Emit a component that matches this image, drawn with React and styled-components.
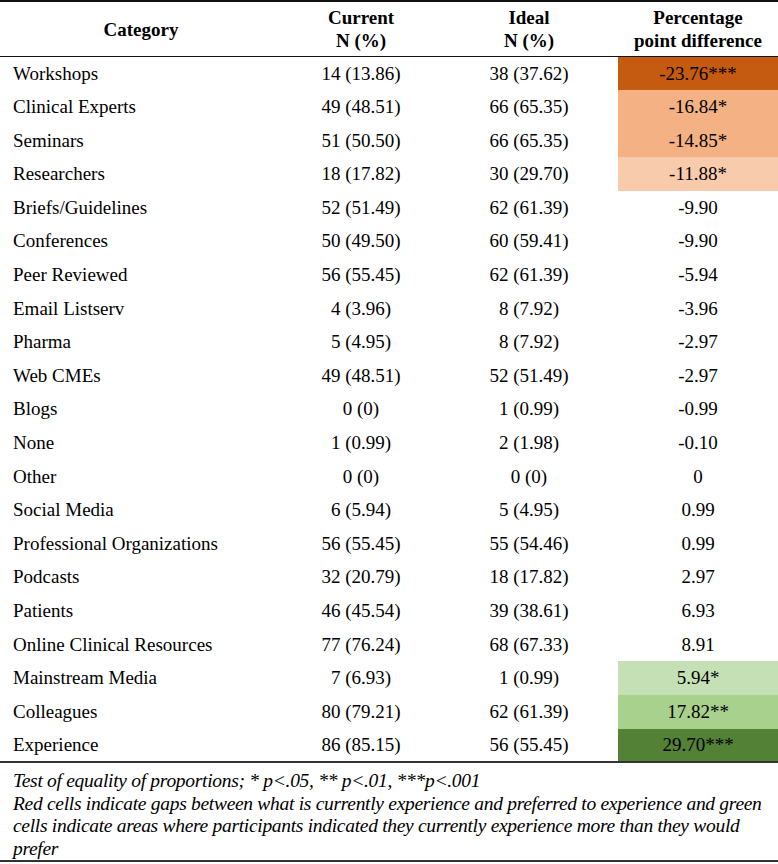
import React from "react";
import styled, { createGlobalStyle } from "styled-components";

const serif = `"Liberation Serif", "Times New Roman", serif`;

const Global = createGlobalStyle`
  html, body { margin: 0; padding: 0; background: #fff; }
  body { font-family: ${serif}; color: #000; }
`;

const Wrap = styled.div`
  width: 778px;
`;

const Table = styled.table`
  width: 778px;
  border-collapse: collapse;
  table-layout: fixed;
  font-family: ${serif};
  font-size: 19px;
  border-top: 2px solid #111;
`;

const HeadCell = styled.th`
  height: 54px;
  padding: 0;
  font-weight: bold;
  text-align: center;
  vertical-align: middle;
  line-height: 23px;
  border-bottom: 1px solid #111;
`;

const Row = styled.tr`
  height: 33.62px;
`;

const NameCell = styled.td`
  padding: 0 0 0 13px;
  text-align: left;
  vertical-align: middle;
  white-space: nowrap;
`;

const NumCell = styled.td`
  padding: 0;
  text-align: center;
  vertical-align: middle;
  white-space: nowrap;
`;

const DiffCell = styled.td`
  padding: 0;
  text-align: center;
  vertical-align: middle;
  white-space: nowrap;
  background: ${(p) => p.$bg || "transparent"};
`;

const Body = styled.tbody`
  border-bottom: 2px solid #333;
`;

const Note = styled.div`
  font-family: ${serif};
  font-style: italic;
  font-size: 19.5px;
  line-height: 22.5px;
  letter-spacing: -0.3px;
  padding: 7px 2px 0 13px;
  border-bottom: 2px solid #333;
`;

const colors = {
  r3: "#C55A11",
  r2: "#F4B183",
  r1: "#F8CBAD",
  g1: "#C5E0B4",
  g2: "#A9D18E",
  g3: "#538135",
};

const rows = [
  ["Workshops", "14 (13.86)", "38 (37.62)", "-23.76***", "r3"],
  ["Clinical Experts", "49 (48.51)", "66 (65.35)", "-16.84*", "r2"],
  ["Seminars", "51 (50.50)", "66 (65.35)", "-14.85*", "r2"],
  ["Researchers", "18 (17.82)", "30 (29.70)", "-11.88*", "r1"],
  ["Briefs/Guidelines", "52 (51.49)", "62 (61.39)", "-9.90"],
  ["Conferences", "50 (49.50)", "60 (59.41)", "-9.90"],
  ["Peer Reviewed", "56 (55.45)", "62 (61.39)", "-5.94"],
  ["Email Listserv", "4 (3.96)", "8 (7.92)", "-3.96"],
  ["Pharma", "5 (4.95)", "8 (7.92)", "-2.97"],
  ["Web CMEs", "49 (48.51)", "52 (51.49)", "-2.97"],
  ["Blogs", "0 (0)", "1 (0.99)", "-0.99"],
  ["None", "1 (0.99)", "2 (1.98)", "-0.10"],
  ["Other", "0 (0)", "0 (0)", "0"],
  ["Social Media", "6 (5.94)", "5 (4.95)", "0.99"],
  ["Professional Organizations", "56 (55.45)", "55 (54.46)", "0.99"],
  ["Podcasts", "32 (20.79)", "18 (17.82)", "2.97"],
  ["Patients", "46 (45.54)", "39 (38.61)", "6.93"],
  ["Online Clinical Resources", "77 (76.24)", "68 (67.33)", "8.91"],
  ["Mainstream Media", "7 (6.93)", "1 (0.99)", "5.94*", "g1"],
  ["Colleagues", "80 (79.21)", "62 (61.39)", "17.82**", "g2"],
  ["Experience", "86 (85.15)", "56 (55.45)", "29.70***", "g3"],
];

export default function App() {
  return (
    <Wrap>
      <Global />
      <Table>
        <colgroup>
          <col style={{ width: 282 }} />
          <col style={{ width: 158 }} />
          <col style={{ width: 178 }} />
          <col style={{ width: 160 }} />
        </colgroup>
        <thead>
          <tr>
            <HeadCell>Category</HeadCell>
            <HeadCell>
              Current
              <br />N (%)
            </HeadCell>
            <HeadCell>
              Ideal
              <br />N (%)
            </HeadCell>
            <HeadCell>
              Percentage
              <br />
              point difference
            </HeadCell>
          </tr>
        </thead>
        <Body>
          {rows.map(([name, cur, ideal, diff, c]) => (
            <Row key={name}>
              <NameCell>{name}</NameCell>
              <NumCell>{cur}</NumCell>
              <NumCell>{ideal}</NumCell>
              <DiffCell $bg={c ? colors[c] : undefined}>{diff}</DiffCell>
            </Row>
          ))}
        </Body>
      </Table>
      <Note>
        Test of equality of proportions; * <i>p</i>&lt;.05, ** <i>p</i>&lt;.01, ***<i>p</i>&lt;.001
        <br />
        Red cells indicate gaps between what is currently experience and preferred to experience and green
        cells indicate areas where participants indicated they currently experience more than they would
        prefer
      </Note>
    </Wrap>
  );
}
